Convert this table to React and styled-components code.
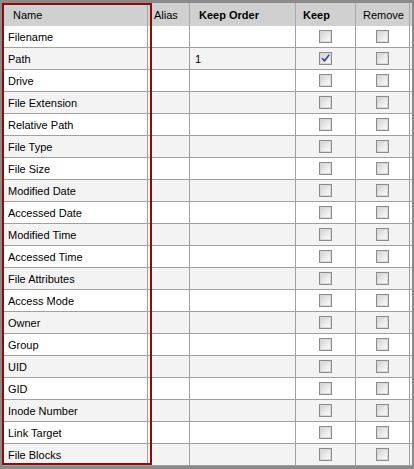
import React from "react";
import styled, { createGlobalStyle } from "styled-components";

const Global = createGlobalStyle`
  html, body { margin: 0; padding: 0; background: #ffffff; }
  body { font-family: "Liberation Sans", Arial, sans-serif; font-size: 11px; color: #000; }
`;

const COLS = "146px 42px 106px 60px 54px 1fr";

const Frame = styled.div`
  position: relative;
  width: 414px;
  height: 469px;
  box-sizing: border-box;
  border-top: 3px solid #8a8a8a;
  border-bottom: 3px solid #8a8a8a;
  border-left: 2px solid #8a8a8a;
  border-right: 2px solid #8a8a8a;
  background: #ffffff;
  overflow: hidden;
`;

const HeaderRow = styled.div`
  display: grid;
  grid-template-columns: ${COLS};
  height: 23px;
  background: #d0d0d0;
`;

const HeadCell = styled.div`
  display: flex;
  align-items: center;
  padding-left: ${(p) => p.$pad}px;
  font-weight: ${(p) => (p.$bold ? 700 : 400)};
  border-right: ${(p) => (p.$last ? "none" : "1px solid #a8a8a8")};
  white-space: nowrap;
  overflow: hidden;
`;

const Row = styled.div`
  display: grid;
  grid-template-columns: ${COLS};
  height: 22px;
  box-sizing: border-box;
  background: ${(p) => (p.$alt ? "#f3f3f3" : "#ffffff")};
`;

const Cell = styled.div`
  display: flex;
  align-items: center;
  justify-content: ${(p) => (p.$center ? "center" : "flex-start")};
  padding-left: ${(p) => p.$pad || 0}px;
  box-sizing: border-box;
  border-bottom: 1px solid #a0a0a0;
  border-right: ${(p) => (p.$last ? "none" : "1px solid #a0a0a0")};
  white-space: nowrap;
  overflow: hidden;
`;

const Box = styled.span`
  position: relative;
  display: block;
  width: 13px;
  height: 13px;
  box-sizing: border-box;
  border: 1px solid #8c8c8c;
  box-shadow: inset 0 0 0 1px #d8d8d8;
  background: linear-gradient(135deg, #cfd0d4 0%, #e8e8ea 50%, #ffffff 100%);
`;

const Check = styled.svg`
  position: absolute;
  left: 1px;
  top: 1px;
`;

const Highlight = styled.div`
  position: absolute;
  left: 0;
  top: 0;
  width: 150px;
  height: 462px;
  box-sizing: border-box;
  border: 2px solid #8e0b0b;
  pointer-events: none;
`;

const CheckBox = ({ checked }) => (
  <Box>
    {checked && (
      <Check width="9" height="9" viewBox="0 0 9 9">
        <path d="M1.5 4.5 L3.5 7 L7.8 1.2" fill="none" stroke="#2c45a0" strokeWidth="1.6" strokeLinecap="round" strokeLinejoin="round" />
      </Check>
    )}
  </Box>
);

const fields = [
  "Filename",
  "Path",
  "Drive",
  "File Extension",
  "Relative Path",
  "File Type",
  "File Size",
  "Modified Date",
  "Accessed Date",
  "Modified Time",
  "Accessed Time",
  "File Attributes",
  "Access Mode",
  "Owner",
  "Group",
  "UID",
  "GID",
  "Inode Number",
  "Link Target",
  "File Blocks",
];

export default function App() {
  return (
    <>
      <Global />
      <Frame>
        <HeaderRow>
          <HeadCell $pad={11}>Name</HeadCell>
          <HeadCell $pad={6}>Alias</HeadCell>
          <HeadCell $pad={9} $bold>Keep Order</HeadCell>
          <HeadCell $pad={7} $bold>Keep</HeadCell>
          <HeadCell $pad={7}>Remove</HeadCell>
          <HeadCell $last />
        </HeaderRow>
        {fields.map((f, i) => (
          <Row key={f} $alt={i % 2 === 1}>
            <Cell $pad={6}>{f}</Cell>
            <Cell />
            <Cell $pad={5}>{f === "Path" ? "1" : ""}</Cell>
            <Cell $center>
              <CheckBox checked={f === "Path"} />
            </Cell>
            <Cell $center>
              <CheckBox />
            </Cell>
            <Cell $last />
          </Row>
        ))}
        <Highlight />
      </Frame>
    </>
  );
}
